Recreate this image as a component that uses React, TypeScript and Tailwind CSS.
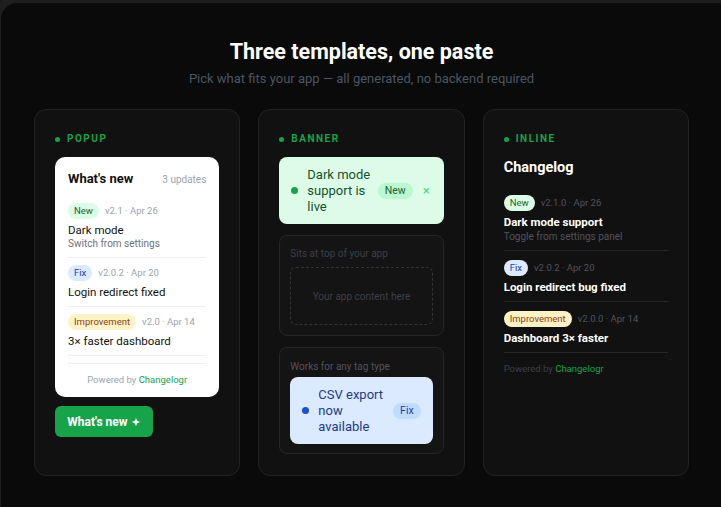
import React from "react";

type Tone = "green" | "blue" | "amber";

const lightTag: Record<Tone, string> = {
  green: "bg-[#dcfce7] text-[#166534]",
  blue: "bg-[#dbeafe] text-[#1e40af]",
  amber: "bg-[#fef3c7] text-[#92400e]",
};

function Tag({ tone, children }: { tone: Tone; children: React.ReactNode }) {
  return (
    <span className={`inline-flex h-[16px] items-center whitespace-nowrap rounded-full px-[6px] text-[9.5px] leading-none ${lightTag[tone]}`}>
      {children}
    </span>
  );
}

function SectionLabel({ children }: { children: React.ReactNode }) {
  return (
    <div className="flex h-[10px] items-center gap-[7px]">
      <span className="h-[5px] w-[5px] rounded-full bg-[#16a34a]" />
      <span className="text-[10px] font-bold uppercase leading-none tracking-[0.15em] text-[#16a34a]">{children}</span>
    </div>
  );
}

const popupItems = [
  { tone: "green" as Tone, tag: "New", meta: "v2.1 · Apr 26", title: "Dark mode", sub: "Switch from settings" },
  { tone: "blue" as Tone, tag: "Fix", meta: "v2.0.2 · Apr 20", title: "Login redirect fixed" },
  { tone: "amber" as Tone, tag: "Improvement", meta: "v2.0 · Apr 14", title: "3× faster dashboard" },
];

const inlineItems = [
  { tone: "green" as Tone, tag: "New", meta: "v2.1.0 · Apr 26", title: "Dark mode support", sub: "Toggle from settings panel" },
  { tone: "blue" as Tone, tag: "Fix", meta: "v2.0.2 · Apr 20", title: "Login redirect bug fixed" },
  { tone: "amber" as Tone, tag: "Improvement", meta: "v2.0.0 · Apr 14", title: "Dashboard 3× faster" },
];

function Card({ children }: { children: React.ReactNode }) {
  return (
    <div className="flex flex-col rounded-[12px] border border-[#222222] bg-[#111111] px-[20px] pt-[24px]">{children}</div>
  );
}

function PopupColumn() {
  return (
    <Card>
      <SectionLabel>Popup</SectionLabel>
      <div className="mt-[13px] rounded-[10px] bg-white px-[13px] pt-[14px] pb-[11px]">
        <div className="flex h-[16px] items-center justify-between">
          <span className="text-[13px] font-bold text-[#111111]">What's new</span>
          <span className="text-[10px] text-[#9ca3af]">3 updates</span>
        </div>
        <div className="mt-[16px]">
          {popupItems.map((it) => (
            <div key={it.title} className="border-b border-[#eeeeee] pt-[7px] pb-[7px] first:pt-0">
              <div className="flex items-center gap-[6px] whitespace-nowrap">
                <Tag tone={it.tone}>{it.tag}</Tag>
                <span className="text-[9.5px] leading-none text-[#9ca3af]">{it.meta}</span>
              </div>
              <div className="mt-[4px] text-[11.5px] leading-[14px] text-[#111111]">{it.title}</div>
              {it.sub && <div className="mt-[1px] text-[10px] leading-[12px] text-[#6b7280]">{it.sub}</div>}
            </div>
          ))}
        </div>
        <div className="mt-[7px] border-t border-[#eeeeee] pt-[10px] text-center text-[9.5px] leading-[12px] text-[#9ca3af]">
          Powered by <span className="text-[#16a34a]">Changelogr</span>
        </div>
      </div>
      <button className="mt-[9px] flex h-[31px] w-[98px] items-center justify-center gap-[3px] rounded-[6px] bg-[#16a34a] text-[12px] font-bold text-white">
        What's new
        <svg width="10" height="10" viewBox="0 0 12 12" aria-hidden="true">
          <path d="M6 0.5 C6.5 4 8 5.5 11.5 6 C8 6.5 6.5 8 6 11.5 C5.5 8 4 6.5 0.5 6 C4 5.5 5.5 4 6 0.5 Z" fill="white" />
        </svg>
      </button>
    </Card>
  );
}

function Banner({ tone, text, tag, close }: { tone: "green" | "blue"; text: string; tag: string; close?: boolean }) {
  const box = tone === "green" ? "bg-[#dcfce7] text-[#14532d] pl-[12px] pr-[14px]" : "bg-[#dbeafe] text-[#1e3a8a] pl-[12px] pr-[12px]";
  const dot = tone === "green" ? "bg-[#16a34a]" : "bg-[#1d4ed8]";
  const pill = tone === "green" ? "bg-[#bbf7d0] text-[#166534]" : "bg-[#bfdbfe] text-[#1e40af]";
  return (
    <div className={`flex h-[67px] items-center rounded-[8px] ${box}`}>
      <span className={`h-[7px] w-[7px] shrink-0 rounded-full ${dot}`} />
      <span className="ml-[9px] w-[68px] text-[13px] leading-[16px]">{text}</span>
      <span className={`ml-auto inline-flex h-[16px] items-center rounded-full px-[7px] text-[10.5px] ${pill}`}>{tag}</span>
      {close && <span className="ml-[10px] text-[13px] leading-none text-[#4ade80]">×</span>}
    </div>
  );
}

function BannerColumn() {
  return (
    <Card>
      <SectionLabel>Banner</SectionLabel>
      <div className="mt-[13px]">
        <Banner tone="green" text="Dark mode support is live" tag="New" close />
      </div>
      <div className="mt-[11px] rounded-[8px] border border-[#252525] bg-[#141414] px-[10px] pt-[12px] pb-[10px]">
        <div className="text-[10px] leading-[12px] text-[#3f3f46]">Sits at top of your app</div>
        <div className="mt-[7px] flex h-[58px] items-center justify-center rounded-[6px] border border-dashed border-[#333333] text-[10px] text-[#3f3f46]">
          Your app content here
        </div>
      </div>
      <div className="mt-[11px] rounded-[8px] border border-[#252525] bg-[#141414] px-[10px] pt-[13px] pb-[9px]">
        <div className="mb-[4px] text-[10px] leading-[12px] text-[#52525b]">Works for any tag type</div>
        <Banner tone="blue" text="CSV export now available" tag="Fix" />
      </div>
    </Card>
  );
}

function InlineColumn() {
  return (
    <Card>
      <SectionLabel>Inline</SectionLabel>
      <div className="mt-[14px] text-[14.5px] font-bold leading-[20px] text-white">Changelog</div>
      <div className="mt-[17px]">
        {inlineItems.map((it) => (
          <div key={it.title} className="border-b border-[#262626] pt-[9px] pb-[7px] first:pt-0">
            <div className="flex items-center gap-[6px] whitespace-nowrap">
              <Tag tone={it.tone}>{it.tag}</Tag>
              <span className="text-[9.5px] leading-none text-[#52525b]">{it.meta}</span>
            </div>
            <div className="mt-[4px] text-[11.5px] font-bold leading-[14px] text-white">{it.title}</div>
            {it.sub && <div className="mt-[2px] text-[10px] leading-[12px] text-[#52525b]">{it.sub}</div>}
          </div>
        ))}
      </div>
      <div className="mt-[10px] text-[9.5px] leading-[12px] text-[#3f3f46]">
        Powered by <span className="text-[#16a34a]">Changelogr</span>
      </div>
    </Card>
  );
}

export default function App() {
  return (
    <div className="h-[507px] w-[721px] overflow-hidden bg-[#1e1e1e] pt-[3px] pl-[1px]" style={{ fontFamily: 'Roboto, "Noto Sans", sans-serif' }}>
      <div className="h-[520px] w-[740px] rounded-[16px] bg-[#0a0a0a] pr-[19px]">
        <div className="pt-[35px] text-center">
          <h1 className="text-[21.5px] font-bold leading-[28px] text-white">Three templates, one paste</h1>
          <p className="mt-[4px] text-[13px] leading-[18px] text-[#4b5563]">Pick what fits your app — all generated, no backend required</p>
        </div>
        <div className="mt-[21px] grid h-[367px] grid-cols-3 gap-[18px] px-[33px]">
          <PopupColumn />
          <BannerColumn />
          <InlineColumn />
        </div>
      </div>
    </div>
  );
}
